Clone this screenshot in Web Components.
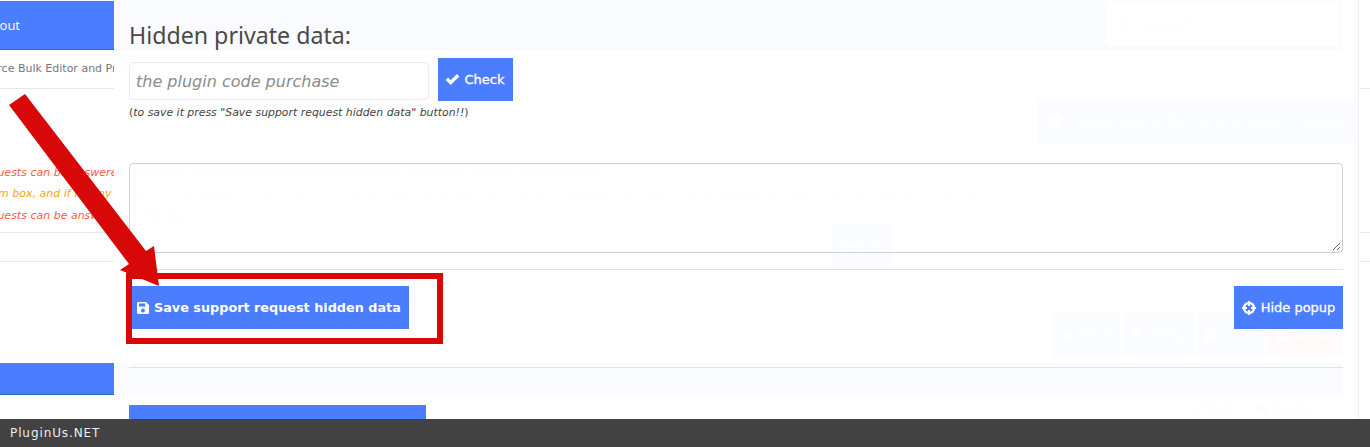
<!DOCTYPE html>
<html lang="en"><head><meta charset="utf-8"><title>Hidden private data</title>
<style>
html,body{margin:0;padding:0;background:#fff}
body{width:1370px;height:447px;overflow:hidden;font-family:"DejaVu Sans",sans-serif}
</style></head><body>
<x-page>
  <x-forum slot="forum"></x-forum>
  <x-popup slot="popup"></x-popup>
  <x-callout slot="callout"></x-callout>
  <x-footer slot="footer">PluginUs.NET</x-footer>
</x-page>
<script>
const ICONS={
 check:'<svg width="15" height="13" viewBox="0 0 15 13"><path d="M.6 7 3 4.600 5.700 7.300 12 1 14.400 3.400 5.700 12.100Z" fill="currentColor"/></svg>',
 save:'<svg width="12" height="12" viewBox="0 0 12 12"><path fill-rule="evenodd" fill="currentColor" d="M1.3 0H9L12 3V10.700A1.300 1.300 0 0 1 10.700 12H1.300A1.300 1.300 0 0 1 0 10.700V1.300A1.300 1.300 0 0 1 1.300 0ZM2 1.600V4.500H8.200V1.600ZM6 6.600A1.900 1.900 0 1 0 6 10.400A1.900 1.900 0 1 0 6 6.600Z"/></svg>',
 cross:'<svg width="14" height="14" viewBox="0 0 14 14"><g fill="none" stroke="currentColor"><circle cx="7" cy="7" r="5" stroke-width="2.400"/><path d="M7 0V5M7 9V14M0 7H5M9 7H14" stroke-width="2"/></g></svg>',
 search:'<svg width="13" height="13" viewBox="0 0 13 13"><g fill="none" stroke="currentColor" stroke-width="2"><circle cx="5.500" cy="5.500" r="4.200"/><path d="M8.600 8.600 12.400 12.400"/></g></svg>',
 square:'<svg width="12" height="12" viewBox="0 0 12 12"><rect width="12" height="12" rx="1.500" fill="currentColor"/></svg>',
 move:'<svg width="13" height="11" viewBox="0 0 13 11"><path d="M1 1 12 10M1 10 12 1" stroke="currentColor" stroke-width="2.400"/></svg>',
 pin:'<svg width="10" height="14" viewBox="0 0 10 14"><path d="M2 0H8V6L10 8V9H6L5 14 4 9H0V8L2 6Z" fill="currentColor"/></svg>',
 lock:'<svg width="11" height="13" viewBox="0 0 11 13"><path d="M0 6H11V13H0Z" fill="currentColor"/><path d="M2.500 6V3.500A3 3 0 0 1 8.500 3.500V6" fill="none" stroke="currentColor" stroke-width="1.600"/></svg>',
 trash:'<svg width="10" height="12" viewBox="0 0 10 12"><path d="M0 1.500H10V3H0ZM1 3.500H9V12H1Z" fill="currentColor"/></svg>',
 pencil:'<svg width="11" height="11" viewBox="0 0 11 11"><path d="M0 11 .8 8 8 .8 10.200 3 3 10.200Z" fill="currentColor"/></svg>',
 quote:'<svg width="12" height="10" viewBox="0 0 12 10"><path d="M0 5C0 2 1.500 .5 4.500 0V2C3 2.500 2.500 3.200 2.500 4H5V10H0ZM7 5C7 2 8.500 .5 11.500 0V2C10 2.500 9.500 3.200 9.500 4H12V10H7Z" fill="currentColor"/></svg>'
};
function def(name,html){
  customElements.define(name,class extends HTMLElement{
    constructor(){super();const r=this.attachShadow({mode:'open'});r.innerHTML=html;}
  });
}
def('x-icon-btn',`<style>
:host{display:inline-flex;align-items:center;justify-content:center;gap:var(--gap,5px);box-sizing:border-box;height:var(--h,43px);padding:0 var(--px,7px);background:var(--bg,#4a7dff);color:#fff;font:var(--font,13px "DejaVu Sans",sans-serif);white-space:nowrap;-webkit-text-stroke:var(--stroke,0)}
::slotted(svg){flex:none}
</style><slot></slot>`);
def('x-page',`<style>
:host{display:flex;flex-direction:column;width:1370px;height:447px;overflow:hidden}
.stage{position:relative;height:419px;overflow:hidden;flex:none}
.foot{flex:none;height:28px}
</style><div class="stage"><slot name="forum"></slot><slot name="popup"></slot><slot name="callout"></slot></div><div class="foot"><slot name="footer"></slot></div>`);
def('x-footer',`<style>
:host{display:flex;align-items:center;box-sizing:border-box;height:28px;padding-left:10px;background:#424242;color:#ececec;font:12px "DejaVu Sans",sans-serif;letter-spacing:.9px}
</style><slot></slot>`);
def('x-forum',`<style>
:host{display:block;width:1370px;height:419px;overflow:hidden;font:11px "DejaVu Sans",sans-serif;color:#777;box-sizing:border-box;padding-top:1px}
.top{display:flex;justify-content:space-between;height:49px;width:1342px;box-sizing:border-box;background:#4a7dff;border-bottom:1px solid #2968b0;color:#fff}
.logout{width:114px;display:flex;align-items:center;justify-content:flex-end;padding-right:94px;box-sizing:border-box;font:13px "Open Sans",sans-serif}
.search{width:232px;margin:2px 3px 3px 0;background:#fff;display:flex;align-items:center;gap:11px;padding-left:11px;color:#999;font:italic 14px "DejaVu Sans",sans-serif;box-sizing:border-box}
.crumb{height:38px;line-height:38px;border-bottom:1px solid #e8e8e8;white-space:nowrap;margin-left:-69px;width:1439px}
.pd-row{display:flex;justify-content:flex-end;width:1358px;margin-top:9px}
.pd{display:flex;align-items:center;gap:6px;width:320px;height:45px;background:#6a93ff;color:#fff;font:13px "DejaVu Sans",sans-serif;padding-left:11px;box-sizing:border-box;white-space:nowrap;overflow:hidden}
.notes{margin:18.500px 0 0 -24px;font:italic 11px/21.500px "DejaVu Sans",sans-serif;color:#ff5a4a;white-space:nowrap}
.notes .o{color:#ffa31a}
.rule{height:1px;background:#e8e8e8}
.search-row{display:flex;justify-content:flex-start;height:28px;padding-left:832px}
.search-btn{height:43px;width:61px;margin-top:-8px;--bg:#6a93ff}
.acts{display:flex;justify-content:flex-end;gap:2px;width:1342px;margin-top:51px;--bg:#6a93ff}
.bar{height:31px;width:1342px;background:#4a7dff;border-bottom:1px solid #2968b0;margin-top:7px}
.edit{display:flex;justify-content:flex-end;gap:20px;width:1312px;margin-top:6px;font:13px "DejaVu Sans",sans-serif;color:#888}
.edit span{display:inline-flex;align-items:center;gap:5px}
</style>
<div class="top"><div class="logout">Logout</div><div class="search">${ICONS.search}<span>Search ...</span></div></div>
<div class="crumb">WooCommerce Bulk Editor and Products Manager Professional (old name is WOOBE) &gt; Plugin support</div>
<div class="pd-row"><div class="pd">${ICONS.square}<span>Private data of the current support request</span></div></div>
<div class="notes">Requests can be answered in Monday. If you have problems with registration ask help on contact us page please<br><span class="o">forum box, and if no any email from the support there - back to the forum and read answer here. DO NOT ANSWER ON EMAILS [noreply@pluginus.net] FROM THE FORUM!! Emails are</span><br>Requests can be answered in Monday.</div>
<div class="rule" style="margin-top:5.500px"></div>
<div class="search-row"><x-icon-btn class="search-btn">Search</x-icon-btn></div>
<div class="rule"></div>
<div class="acts">
 <x-icon-btn style="width:68px">${ICONS.move}Move</x-icon-btn>
 <x-icon-btn style="width:72px">${ICONS.pin}Sticky</x-icon-btn>
 <x-icon-btn style="width:68px">${ICONS.lock}Close</x-icon-btn>
 <x-icon-btn style="width:75px;--bg:#ff7a5c">${ICONS.trash}Delete</x-icon-btn>
</div>
<div class="bar"></div>
<div class="edit"><span>${ICONS.pencil}Edit</span><span>${ICONS.quote}Quote</span></div>`);
def('x-popup',`<style>
:host{position:absolute;left:114px;top:0;width:1245px;height:419px;box-sizing:border-box;padding:0 15px;background:rgba(255,255,255,.972);border-right:1px solid #f0f0f0;overflow:hidden;color:#444;font:10.900px "DejaVu Sans",sans-serif}
.inner{width:1214px}
h2{margin:0;height:58px;padding-top:21px;box-sizing:border-box;font:400 23.200px/28px "Noto Sans",sans-serif;color:#4a4a4a;white-space:nowrap}
.row{display:flex;align-items:flex-start;gap:9px}
.field{width:300px;height:38px;margin-top:4px;box-sizing:border-box;border:1px solid #ececec;border-radius:4px;background:#fff;padding-left:6px;display:flex;align-items:center;color:#8c8c8c;font:italic 16px "DejaVu Sans",sans-serif;white-space:nowrap}
.hint{margin:3px 0 0;height:18px;font:10.900px/18px "DejaVu Sans",sans-serif;color:#444;white-space:nowrap}
.area{box-sizing:border-box;height:90px;margin-top:41px;border:1px solid #ced1d8;border-radius:4px;position:relative}
.grip{position:absolute;right:1px;bottom:1px}
.hr{height:1px;background:#dfe1e6}
.actions{display:flex;justify-content:space-between;margin-top:16px}
.big{display:block;width:297px;height:43px;background:#4a7dff;margin-top:37px}
.check{width:75px;--px:0px;--stroke:.3px;--gap:5px;padding-right:2px}
.hide{width:109px;--px:0px;--stroke:.3px;--gap:5px}
.save{width:280px;--px:0px;--gap:5px;justify-content:flex-start;padding-left:8px;--font:bold 12.800px "DejaVu Sans",sans-serif}
</style><div class="inner">
<h2>Hidden private data:</h2>
<div class="row"><div class="field">the plugin code purchase</div><x-icon-btn class="check">${ICONS.check}Check</x-icon-btn></div>
<p class="hint">(<i>to save it press "Save support request hidden data" button!!</i>)</p>
<div class="area"><svg class="grip" width="9" height="9" viewBox="0 0 9 9"><path d="M1 8 8 1M5 8 8 5" stroke="#666" stroke-width="1"/></svg></div>
<div class="hr" style="margin-top:16px"></div>
<div class="actions"><x-icon-btn class="save">${ICONS.save}Save support request hidden data</x-icon-btn><x-icon-btn class="hide">${ICONS.cross}Hide popup</x-icon-btn></div>
<div class="hr" style="margin-top:38px"></div>
<div class="big"></div>
</div>`);
def('x-callout',`<style>
:host{position:absolute;left:0;top:0;width:1370px;height:419px;pointer-events:none;display:block}
svg{position:absolute;left:0;top:0}
</style><svg width="1370" height="419" viewBox="0 0 1370 419">
<path d="M129 276H440V341H129Z" fill="none" stroke="#d80808" stroke-width="6"/>
<path d="M9 105 25 94 146 251 154 246 159 286 120 270 129 264Z" fill="#d80808"/>
</svg>`);
</script>
</body></html>
